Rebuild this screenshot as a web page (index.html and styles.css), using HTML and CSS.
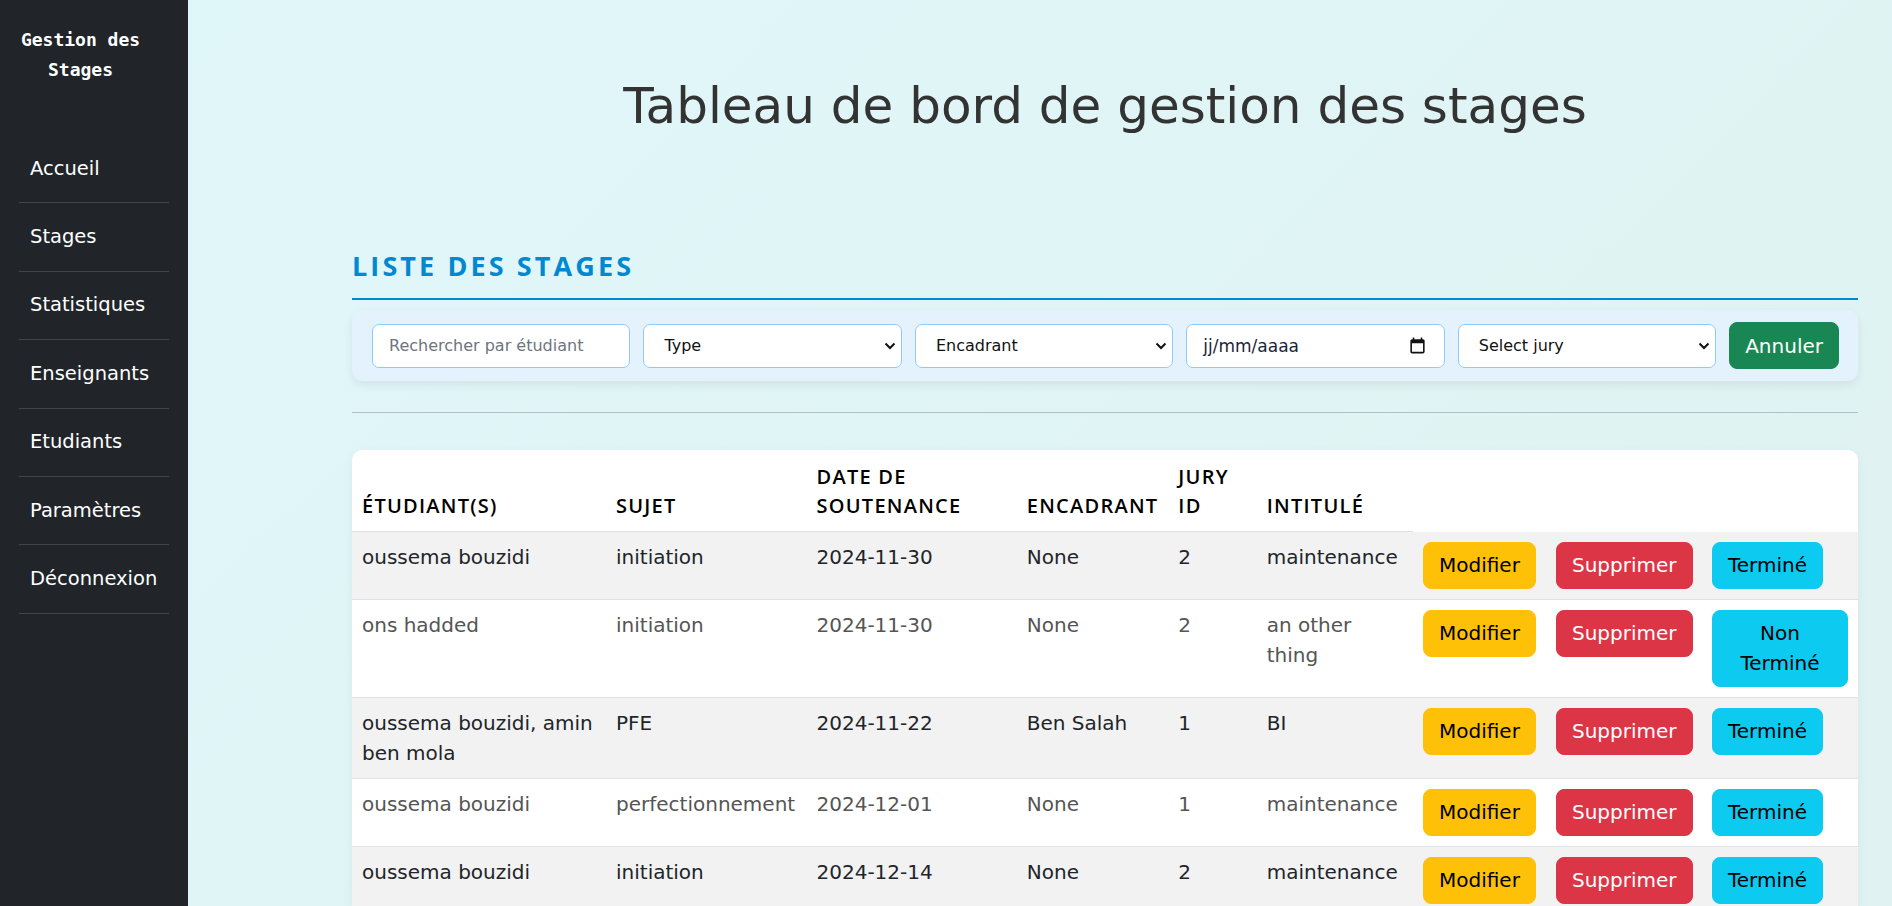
FILE: index.html
```html
<!DOCTYPE html>
<html lang="fr">
<head>
<meta charset="utf-8">
<title>Gestion des Stages</title>
<link rel="stylesheet" href="styles.css">
</head>
<body>
<div class="layout">
  <aside class="sidebar">
    <div class="brand">Gestion des Stages</div>
    <ul class="nav">
      <li><a href="#">Accueil</a></li>
      <li><a href="#">Stages</a></li>
      <li><a href="#">Statistiques</a></li>
      <li><a href="#">Enseignants</a></li>
      <li><a href="#">Etudiants</a></li>
      <li><a href="#">Paramètres</a></li>
      <li><a href="#">Déconnexion</a></li>
    </ul>
  </aside>
  <main class="main">
    <h1 class="page-title">Tableau de bord de gestion des stages</h1>
    <h2 class="section-title">LISTE DES STAGES</h2>
    <div class="filters">
      <input class="field" type="text" placeholder="Rechercher par étudiant">
      <div class="select-wrap">
        <select class="field"><option>Type</option></select>
        <svg class="chev" viewBox="0 0 12 8"><path d="M1.5 1.5 6 6l4.5-4.5" fill="none" stroke="#111" stroke-width="2"/></svg>
      </div>
      <div class="select-wrap">
        <select class="field"><option>Encadrant</option></select>
        <svg class="chev" viewBox="0 0 12 8"><path d="M1.5 1.5 6 6l4.5-4.5" fill="none" stroke="#111" stroke-width="2"/></svg>
      </div>
      <div class="field date">
        <span>jj/mm/aaaa</span>
        <svg class="cal" viewBox="0 0 24 24"><path d="M19 4h-1V2h-2v2H8V2H6v2H5c-1.11 0-1.99.9-1.99 2L3 20a2 2 0 0 0 2 2h14c1.1 0 2-.9 2-2V6c0-1.1-.9-2-2-2zm0 16H5V9h14v11z" fill="#111"/></svg>
      </div>
      <div class="select-wrap">
        <select class="field"><option>Select jury</option></select>
        <svg class="chev" viewBox="0 0 12 8"><path d="M1.5 1.5 6 6l4.5-4.5" fill="none" stroke="#111" stroke-width="2"/></svg>
      </div>
      <button class="btn btn-success">Annuler</button>
    </div>
    <hr class="divider">
    <div class="table-card">
      <table class="stages">
        <colgroup>
          <col class="w1"><col class="w2"><col class="w3"><col class="w4"><col class="w5"><col class="w6"><col class="w7"><col class="w8"><col class="w9">
        </colgroup>
        <thead>
          <tr>
            <th>ÉTUDIANT(S)</th>
            <th>SUJET</th>
            <th>DATE DE SOUTENANCE</th>
            <th>ENCADRANT</th>
            <th>JURY ID</th>
            <th>INTITULÉ</th>
          </tr>
        </thead>
        <tbody>
          <tr>
            <td>oussema bouzidi</td><td>initiation</td><td>2024-11-30</td><td>None</td><td>2</td><td>maintenance</td>
            <td><button class="btn btn-warning">Modifier</button></td>
            <td><button class="btn btn-danger">Supprimer</button></td>
            <td><button class="btn btn-info">Terminé</button></td>
          </tr>
          <tr>
            <td>ons hadded</td><td>initiation</td><td>2024-11-30</td><td>None</td><td>2</td><td>an other thing</td>
            <td><button class="btn btn-warning">Modifier</button></td>
            <td><button class="btn btn-danger">Supprimer</button></td>
            <td><button class="btn btn-info">Non Terminé</button></td>
          </tr>
          <tr>
            <td>oussema bouzidi, amin ben mola</td><td>PFE</td><td>2024-11-22</td><td>Ben Salah</td><td>1</td><td>BI</td>
            <td><button class="btn btn-warning">Modifier</button></td>
            <td><button class="btn btn-danger">Supprimer</button></td>
            <td><button class="btn btn-info">Terminé</button></td>
          </tr>
          <tr>
            <td>oussema bouzidi</td><td>perfectionnement</td><td>2024-12-01</td><td>None</td><td>1</td><td>maintenance</td>
            <td><button class="btn btn-warning">Modifier</button></td>
            <td><button class="btn btn-danger">Supprimer</button></td>
            <td><button class="btn btn-info">Terminé</button></td>
          </tr>
          <tr>
            <td>oussema bouzidi</td><td>initiation</td><td>2024-12-14</td><td>None</td><td>2</td><td>maintenance</td>
            <td><button class="btn btn-warning">Modifier</button></td>
            <td><button class="btn btn-danger">Supprimer</button></td>
            <td><button class="btn btn-info">Terminé</button></td>
          </tr>
        </tbody>
      </table>
    </div>
  </main>
</div>
</body>
</html>
```
FILE: styles.css
```css
* { box-sizing: border-box; }
html, body { margin: 0; }
body {
  font-family: "DejaVu Sans", sans-serif;
  color: #212529;
  background: linear-gradient(135deg, #e0f7fa, #e0f2f1);
}
.layout { display: flex; min-height: 100vh; }

/* Sidebar */
.sidebar {
  flex: 0 0 188px;
  width: 188px;
  background: #212529;
  padding: 25px 19px 0;
}
.brand {
  font-family: "DejaVu Sans Mono", monospace;
  font-weight: 700;
  font-size: 18px;
  line-height: 30px;
  color: #fff;
  text-align: center;
  width: 129px;
  margin-left: -3px;
}
.nav { list-style: none; margin: 50px 0 0; padding: 0; }
.nav li { border-bottom: 1px solid rgba(255, 255, 255, 0.15); }
.nav a {
  display: block;
  padding: 18.7px 11px;
  line-height: 30px;
  font-size: 19.5px;
  color: #fff;
  text-decoration: none;
}

/* Main */
.main { flex: 1; min-width: 0; padding: 76px 34px 0 164px; }
.page-title {
  margin: 0;
  font-size: 50px;
  font-weight: 400;
  line-height: 60px;
  text-align: center;
  color: #333;
}
.section-title {
  margin: 109.5px 0 0;
  font-family: "Open Sans", sans-serif;
  font-weight: 700;
  font-size: 27px;
  line-height: 40px;
  letter-spacing: 3.1px;
  color: #0288d1;
  padding-bottom: 12.5px;
  border-bottom: 2px solid #0288d1;
}

/* Filters */
.filters {
  margin-top: 10px;
  display: flex;
  align-items: center;
  gap: 13px;
  padding: 12px 19px 12px 20px;
  background: #e3f2fd;
  border-radius: 10px;
  box-shadow: 0 4px 10px rgba(0, 0, 0, 0.07);
}
.field {
  flex: 1 1 100px;
  min-width: 0;
  height: 44px;
  border: 1px solid #90caf9;
  border-radius: 7px;
  background: #fff;
  font-family: "DejaVu Sans", sans-serif;
  font-size: 16px;
  color: #212529;
  padding: 0 16px;
  outline: none;
}
.field::placeholder { color: #6c757d; }
.select-wrap { position: relative; flex: 1 1 100px; min-width: 0; display: flex; }
.select-wrap .field {
  width: 100%;
  -webkit-appearance: none;
  appearance: none;
  padding: 0 30px 0 20px;
  color: #111;
}
.chev {
  position: absolute;
  right: 6px;
  top: 50%;
  margin-top: -4px;
  width: 12px;
  height: 8px;
  pointer-events: none;
}
.date {
  display: flex;
  align-items: center;
  justify-content: space-between;
  font-size: 17px;
  padding: 0 17px 0 16px;
  color: #1c1f3a;
}
.cal { width: 19px; height: 19px; }

/* Buttons */
.btn {
  display: inline-block;
  vertical-align: top;
  font-family: "DejaVu Sans", sans-serif;
  font-size: 20px;
  line-height: 30px;
  padding: 7.5px 15px;
  border: 1px solid transparent;
  border-radius: 8px;
  cursor: pointer;
  text-align: center;
}
.btn-success { flex: none; background: #198754; border-color: #198754; color: #fff; }
.btn-warning { background: #ffc107; border-color: #ffc107; color: #000; }
.btn-danger { background: #dc3545; border-color: #dc3545; color: #fff; }
.btn-info { background: #0dcaf0; border-color: #0dcaf0; color: #000; }

.divider {
  margin: 31px 0 0;
  border: 0;
  border-top: 1px solid #b0bec5;
  height: 0;
}

/* Table */
.table-card {
  margin-top: 37px;
  background: #fff;
  border-radius: 10px;
  overflow: hidden;
  box-shadow: 0 4px 12px rgba(0, 0, 0, 0.05);
}
.stages { width: 100%; border-collapse: collapse; table-layout: fixed; }
.w1 { width: 254px; }
.w2 { width: 200.5px; }
.w3 { width: 210.3px; }
.w4 { width: 151.5px; }
.w5 { width: 88.4px; }
.w6 { width: 156.3px; }
.w7 { width: 133px; }
.w8 { width: 156px; }
.w9 { width: 156px; }
.stages th {
  font-family: "Open Sans", sans-serif;
  font-weight: 600;
  font-size: 20px;
  line-height: 29px;
  letter-spacing: 1.25px;
  text-align: left;
  vertical-align: bottom;
  padding: 12px 10px 11px;
  border-bottom: 1px solid #dee2e6;
  color: #000;
}
.stages td {
  font-size: 20px;
  line-height: 30px;
  padding: 10px;
  vertical-align: top;
  border-bottom: 1px solid #dee2e6;
  color: #555;
}
.stages tbody tr:nth-child(odd) td { background: #f2f2f2; color: #212529; }
```
